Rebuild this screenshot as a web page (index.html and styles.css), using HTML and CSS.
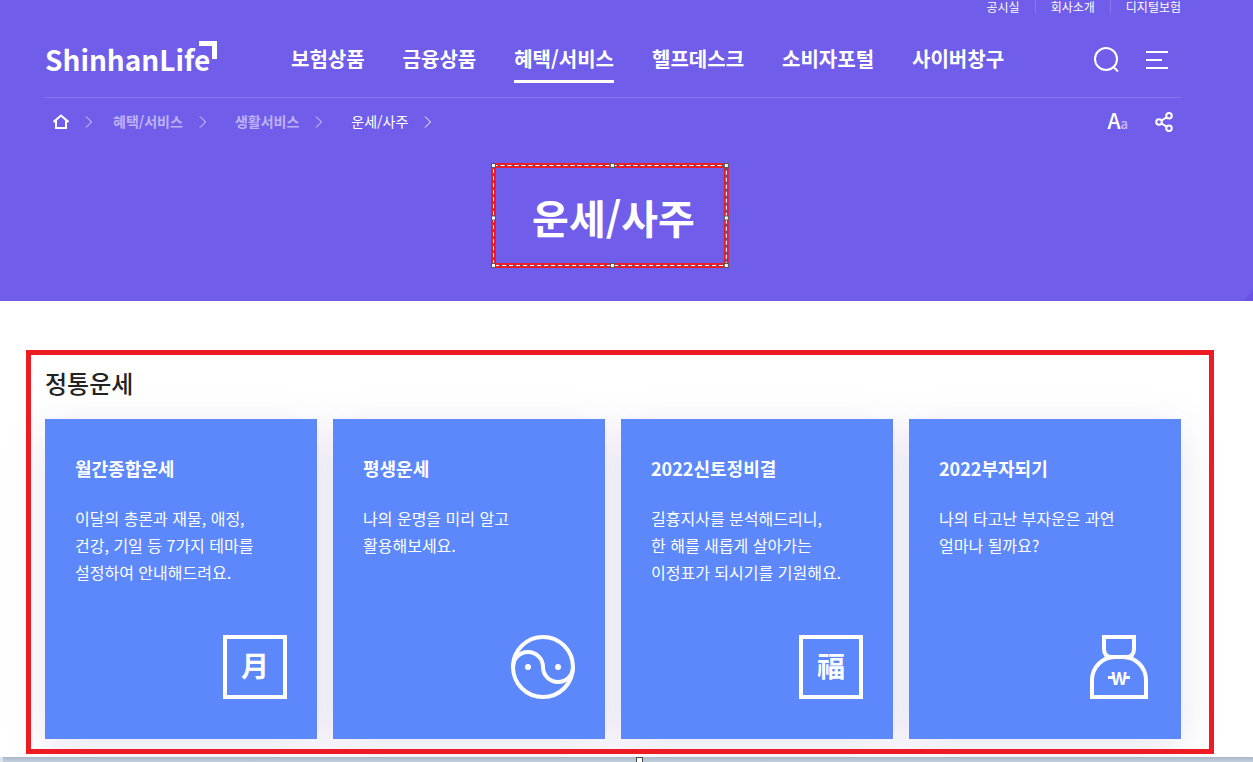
FILE: index.html
```html
<!DOCTYPE html>
<html lang="ko">
<head>
  <meta charset="UTF-8">
  <meta name="viewport" content="width=device-width, initial-scale=1.0">
  <title>운세/사주</title>
  <link rel="stylesheet" href="styles.css">
</head>
<body>

  <!-- Header Section -->
  <header class="hero">
    <nav class="util">
      <a href="#">공시실</a>
      <a href="#">회사소개</a>
      <a href="#">디지털보험</a>
    </nav>

    <div class="gnb">
      <a class="logo" href="#">ShinhanLife<svg class="logo-mark" viewBox="0 0 18 18"><path d="M0 0H18V18H13V5H0z"/></svg></a>
      <nav class="menu">
        <a href="#">보험상품</a>
        <a href="#">금융상품</a>
        <a class="active" href="#">혜택/서비스</a>
        <a href="#">헬프데스크</a>
        <a href="#">소비자포털</a>
        <a href="#">사이버창구</a>
      </nav>
      <div class="tools">
        <button type="button" aria-label="검색">
          <svg width="26" height="26" viewBox="0 0 26 26"><circle cx="13" cy="12" r="11"/><path d="M20 19.500L25 24.500"/></svg>
        </button>
        <button type="button" aria-label="전체메뉴">
          <svg width="24" height="20" viewBox="0 0 24 20"><path d="M1 2H23M1 10H17M1 18H23"/></svg>
        </button>
      </div>
    </div>

    <!-- Breadcrumb -->
    <div class="location">
      <nav class="crumbs">
        <a href="#" aria-label="홈"><svg class="home" width="16" height="16" viewBox="0 0 16 16"><path d="M0.500 8L8 1.500L15.500 8M3 6.500V14H13V6.500"/></svg></a>
        <svg class="arrow" width="8" height="14" viewBox="0 0 8 14"><path d="M1 1.500L6.500 7L1 12.500"/></svg>
        <a class="crumb" href="#">혜택/서비스</a>
        <svg class="arrow" width="8" height="14" viewBox="0 0 8 14"><path d="M1 1.500L6.500 7L1 12.500"/></svg>
        <a class="crumb" href="#">생활서비스</a>
        <svg class="arrow" width="8" height="14" viewBox="0 0 8 14"><path d="M1 1.500L6.500 7L1 12.500"/></svg>
        <a class="crumb current" href="#">운세/사주</a>
        <svg class="arrow current" width="8" height="14" viewBox="0 0 8 14"><path d="M1 1.500L6.500 7L1 12.500"/></svg>
      </nav>
      <div class="page-tools">
        <button class="font-size" type="button">A<small>a</small></button>
        <button type="button" aria-label="공유">
          <svg width="20" height="20" viewBox="0 0 20 20"><circle cx="4" cy="10" r="2.800"/><circle cx="14" cy="3.800" r="2.800"/><circle cx="14" cy="16.200" r="2.800"/><path d="M6.500 8.500L11.500 5.300M6.500 11.500L11.500 14.700"/></svg>
        </button>
      </div>
    </div>

    <h1 class="title">운세/사주
      <svg class="selection" aria-hidden="true">
        <rect class="band" x="2.5" y="2.5"/>
        <rect class="under" x="2.5" y="2.5"/>
        <rect class="dash" x="2.5" y="2.5"/>
        <svg class="handles" x="0" y="0"><rect x="0.500" y="0.500" width="4" height="4"/></svg>
        <svg class="handles" x="50%" y="0"><rect x="0.500" y="0.500" width="4" height="4"/></svg>
        <svg class="handles" x="100%" y="0"><rect x="-4.500" y="0.500" width="4" height="4"/></svg>
        <svg class="handles" x="0" y="50%"><rect x="0.500" y="0.500" width="4" height="4"/></svg>
        <svg class="handles" x="100%" y="50%"><rect x="-4.500" y="0.500" width="4" height="4"/></svg>
        <svg class="handles" x="0" y="100%"><rect x="0.500" y="-4.500" width="4" height="4"/></svg>
        <svg class="handles" x="50%" y="100%"><rect x="0.500" y="-4.500" width="4" height="4"/></svg>
        <svg class="handles" x="100%" y="100%"><rect x="-4.500" y="-4.500" width="4" height="4"/></svg>
      </svg>
    </h1>
  </header>

  <!-- Fortune Cards -->
  <main class="fortune">
    <h2>정통운세</h2>
    <div class="cards">
      <a class="card" href="#">
        <h3>월간종합운세</h3>
        <p>이달의 총론과 재물, 애정,<br>건강, 기일 등 7가지 테마를<br>설정하여 안내해드려요.</p>
        <svg class="icon" viewBox="0 0 64 64"><rect x="2" y="2" width="60" height="60"/><text x="32" y="42">月</text></svg>
      </a>
      <a class="card" href="#">
        <h3>평생운세</h3>
        <p>나의 운명을 미리 알고<br>활용해보세요.</p>
        <svg class="icon" viewBox="0 0 64 64"><circle cx="32" cy="32" r="30"/><path d="M2 32A15 15 0 0 1 32 32A15 15 0 0 0 62 32"/><circle class="dot" cx="17" cy="32" r="3"/><circle class="dot" cx="47" cy="32" r="3"/></svg>
      </a>
      <a class="card" href="#">
        <h3>2022신토정비결</h3>
        <p>길흉지사를 분석해드리니,<br>한 해를 새롭게 살아가는<br>이정표가 되시기를 기원해요.</p>
        <svg class="icon" viewBox="0 0 64 64"><rect x="2" y="2" width="60" height="60"/><text x="32" y="42">福</text></svg>
      </a>
      <a class="card" href="#">
        <h3>2022부자되기</h3>
        <p>나의 타고난 부자운은 과연<br>얼마나 될까요?</p>
        <svg class="icon" viewBox="0 0 64 64"><path d="M17 2H47V14Q47 22 39 22H25Q17 22 17 14V2z"/><path d="M5 62V45A23 23 0 0 1 28 22H36A23 23 0 0 1 59 45V62z"/><path class="bar" d="M21 42.500H27M37 42.500H43"/><text class="won" x="32" y="50">W</text></svg>
      </a>
    </div>
  </main>

  <div class="edge"></div>

</body>
</html>
```
FILE: styles.css
```css
/* General */
* {
  box-sizing: border-box;
}

body {
  margin: 0;
  font-family: "Noto Sans CJK KR", "Noto Sans", sans-serif;
  background-color: #fff;
  color: #222;
  overflow-x: hidden;
}

a {
  color: inherit;
  text-decoration: none;
}

button {
  display: flex;
  padding: 0;
  border: none;
  background: none;
  color: inherit;
  font-family: inherit;
  cursor: pointer;
}

svg {
  display: block;
  fill: none;
  stroke: #fff;
  stroke-width: 2;
}

/* Header section */
.hero {
  padding: 0 72px 33px 45px;
  background: linear-gradient(135deg, transparent 50%, #6853e4 50%) right bottom / 10px 10px no-repeat, #705dea;
  color: #fff;
}

.util {
  display: flex;
  justify-content: flex-end;
  height: 13px;
  font-size: 12px;
  line-height: 13px;
}

.util a {
  padding: 0 15px;
  border-left: 1px solid #8877f0;
}

.util a:first-child {
  border-left: none;
}

.util a:last-child {
  padding-right: 0;
}

.gnb {
  display: flex;
  align-items: flex-end;
  height: 85px;
  border-bottom: 1px solid #8877f0;
}

.logo {
  position: relative;
  width: 246px;
  padding-bottom: 18px;
  font-size: 28px;
  font-weight: bold;
  line-height: 40px;
}

.logo-mark {
  position: absolute;
  top: 2px;
  left: 154px;
  width: 18px;
  height: 18px;
  fill: #fff;
  stroke: none;
}

.menu {
  display: flex;
  gap: 38px;
  font-size: 20px;
  font-weight: bold;
  line-height: 30px;
}

.menu a {
  height: 53px;
  padding-bottom: 6px;
}

.menu .active::after {
  content: "";
  display: block;
  height: 3px;
  margin-top: 6px;
  background-color: #fff;
}

.tools {
  display: flex;
  align-items: center;
  gap: 26px;
  margin-left: auto;
  padding: 0 12px 24px 0;
}

/* Breadcrumb */
.location {
  display: flex;
  justify-content: space-between;
  align-items: center;
  height: 48px;
  padding: 0 6px 0 8px;
}

.crumbs {
  display: flex;
  align-items: center;
  font-size: 14px;
  line-height: 20px;
}

.arrow {
  margin: 0 12px 0 16px;
  stroke-width: 1;
  opacity: 0.8;
}

.arrow.current {
  opacity: 1;
}

.crumb {
  margin-left: 8px;
  padding-bottom: 2px;
  color: #bdb2f6;
  font-weight: bold;
}

.crumb ~ .crumb {
  margin-left: 16px;
}

.crumb.current {
  color: #fff;
  font-weight: normal;
}

.page-tools {
  display: flex;
  align-items: center;
  gap: 27px;
}

.font-size {
  align-items: baseline;
  font-size: 21px;
  font-weight: 500;
  line-height: 24px;
}

.font-size small {
  font-size: 13px;
  opacity: 0.6;
}

/* Page title */
.title {
  position: relative;
  width: fit-content;
  margin: 17px auto 0;
  padding: 22px 34px 19px 41px;
  left: -3px;
  font-size: 40px;
  font-weight: bold;
  line-height: 64px;
}

.selection {
  position: absolute;
  top: 0;
  left: 0;
  width: 100%;
  height: 100%;
  overflow: visible;
}

.selection > rect {
  width: calc(100% - 5px);
  height: calc(100% - 5px);
}

.band {
  stroke: #ed1c24;
  stroke-width: 5;
}

.under {
  stroke: #2f62a8;
  stroke-width: 1;
}

.dash {
  stroke: #fff;
  stroke-width: 1;
  stroke-dasharray: 4 3;
}

.handles {
  overflow: visible;
  fill: #fff;
  stroke: #555;
  stroke-width: 1;
}

/* Fortune cards */
.fortune {
  position: relative;
  isolation: isolate;
  margin: 49px 39px 3px 26px;
  padding: 15px 33px 15px 19px;
}

.fortune::after {
  content: "";
  position: absolute;
  inset: 0;
  border: 5px solid #ed1c24;
  pointer-events: none;
}

.fortune h2 {
  margin: 0 0 18px;
  font-size: 24px;
  font-weight: 500;
  line-height: 36px;
}

.cards {
  display: grid;
  grid-template-columns: repeat(4, 1fr);
  gap: 16px;
}

.card {
  position: relative;
  display: flex;
  flex-direction: column;
  min-height: 320px;
  padding: 35px 30px 40px;
  background-color: #5c88fb;
  color: #fff;
}

.card::before {
  content: "";
  position: absolute;
  inset: 0;
  z-index: -1;
  box-shadow: 0 10px 40px rgba(70, 50, 150, 0.13);
}

.card h3 {
  margin: 0 0 23px;
  font-size: 18px;
  line-height: 28px;
}

.card p {
  margin: 0;
  font-size: 16px;
  line-height: 27px;
  white-space: nowrap;
}

.icon {
  width: 64px;
  height: 64px;
  margin: auto 0 0 auto;
  stroke-width: 4;
}

.icon text {
  fill: #fff;
  stroke: none;
  font-family: "Noto Sans CJK KR", sans-serif;
  font-size: 28px;
  font-weight: bold;
  text-anchor: middle;
}

.icon .dot {
  fill: #fff;
  stroke: none;
}

.icon .won {
  font-size: 17px;
}

.icon .bar {
  stroke-width: 3;
}

/* Bottom edge */
.edge {
  position: relative;
  height: 5px;
  border-left: 3px solid #dde4ee;
  background: linear-gradient(#a9b7c9, #c3d0dd);
}

.edge::after {
  content: "";
  position: absolute;
  top: 0;
  left: 633px;
  width: 5px;
  height: 5px;
  border: 1px solid #444;
  background-color: #fff;
}
```
